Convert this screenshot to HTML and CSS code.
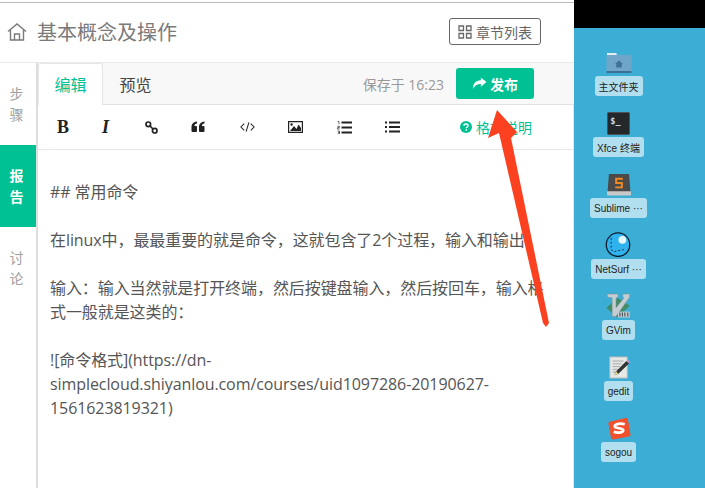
FILE: index.html
```html
<!DOCTYPE html>
<html lang="zh-CN">
<head>
    <meta charset="UTF-8">
    <meta name="viewport" content="width=device-width, initial-scale=1.0">
    <title>基本概念及操作</title>
    <link rel="stylesheet" href="styles.css">
</head>
<body>
    <main class="lab-panel">
        <header class="lab-header">
            <svg class="home-icon" viewBox="0 0 20 20" width="20" height="20">
                <path d="M1 9.500 10 2l9 7.500M3.500 8v10h13V8M7.500 18v-6h5v6" fill="none" stroke="#7a7a7a" stroke-width="1.400"/>
            </svg>
            <h1 class="lab-title">基本概念及操作</h1>
            <a class="chapter-btn" href="#">
                <svg viewBox="0 0 14 14" width="14" height="14">
                    <path d="M1 1h4.500v4.500H1zM8.500 1H13v4.500H8.500zM1 8.500h4.500V13H1zM8.500 8.500H13V13H8.500z" fill="none" stroke="#666" stroke-width="1.300"/>
                </svg>
                章节列表
            </a>
        </header>

        <div class="lab-body">
            <nav class="side-tabs">
                <a class="side-tab" href="#">步<br>骤</a>
                <a class="side-tab active" href="#">报<br>告</a>
                <a class="side-tab" href="#">讨<br>论</a>
            </nav>

            <section class="editor">
                <div class="editor-tabs">
                    <a class="editor-tab active" href="#">编辑</a>
                    <a class="editor-tab" href="#">预览</a>
                    <span class="saved-at">保存于 16:23</span>
                    <a class="publish-btn" href="#">
                        <svg viewBox="0 0 16 14" width="15" height="13">
                            <path d="M9.500 0.500 15.500 5.500 9.500 10.500V7.600C6 7.600 3 8.600 1.200 13 0.800 7.500 3.500 3.600 9.500 3.400Z" fill="#fff"/>
                        </svg>
                        发布
                    </a>
                </div>

                <div class="toolbar">
                    <span class="tool tool-b">B</span>
                    <span class="tool tool-i">I</span>
                    <span class="tool tool-link">
                        <svg viewBox="0 0 13 13" width="13" height="13">
                            <circle cx="3.300" cy="3.300" r="2.300" fill="none" stroke="#222" stroke-width="1.700"/>
                            <circle cx="9.700" cy="9.700" r="2.300" fill="none" stroke="#222" stroke-width="1.700"/>
                            <path d="M4.500 4.500 8.500 8.500" stroke="#222" stroke-width="1.700"/>
                        </svg>
                    </span>
                    <span class="tool">
                        <svg viewBox="0 0 14 12" width="14" height="12">
                            <path d="M0.500 10V6.500C0.500 3 2 1 6 0.500V2.500C4.300 2.800 3.500 3.600 3.400 5H5A1 1 0 0 1 6 6V10A1 1 0 0 1 5 11H1.500A1 1 0 0 1 .5 10ZM8 10V6.500C8 3 9.500 1 13.500 0.500V2.500C11.800 2.800 11 3.600 10.900 5H12.500A1 1 0 0 1 13.500 6V10A1 1 0 0 1 12.500 11H9A1 1 0 0 1 8 10Z" fill="#222"/>
                        </svg>
                    </span>
                    <span class="tool">
                        <svg viewBox="0 0 16 12" width="15" height="12">
                            <path d="M4.500 2.500 1 6l3.500 3.500M11.500 2.500 15 6l-3.500 3.500M9.500 1 6.500 11" fill="none" stroke="#222" stroke-width="1.100"/>
                        </svg>
                    </span>
                    <span class="tool">
                        <svg viewBox="0 0 15 12" width="15" height="12">
                            <path fill-rule="evenodd" d="M0 0h15v12H0ZM1.200 1.200v9.600h12.600V1.200Z" fill="#222"/>
                            <path d="M2 10 6 5l2.500 3L10.500 3.500 13 7v3Z" fill="#222"/>
                            <circle cx="3.600" cy="3.500" r="1.200" fill="#222"/>
                        </svg>
                    </span>
                    <span class="tool">
                        <svg viewBox="0 0 15 13" width="15" height="13">
                            <path d="M4.500 1.500H15M4.500 6.500H15M4.500 11.500H15" stroke="#222" stroke-width="1.800"/>
                            <path d="M0.800 0.500H2V3.200M0.500 5.300H2.400V6.600H0.600V8H2.600M0.500 10H2.500V12.800H0.500M1 11.400H2.500" fill="none" stroke="#222" stroke-width="0.700"/>
                        </svg>
                    </span>
                    <span class="tool">
                        <svg viewBox="0 0 15 12" width="15" height="12">
                            <path d="M4 1.500H15M4 6H15M4 10.500H15" stroke="#222" stroke-width="2"/>
                            <path d="M0 0.500H2V2.500H0ZM0 5H2V7H0ZM0 9.500H2V11.500H0Z" fill="#222"/>
                        </svg>
                    </span>
                    <a class="format-help" href="#">
                        <svg viewBox="0 0 12 12" width="12" height="12">
                            <circle cx="6" cy="6" r="6" fill="#00c194"/>
                            <path d="M4 4.700C4 3.500 5 3 6 3c1.200 0 2 .7 2 1.700C8 6 6.300 6 6.300 7.300" fill="none" stroke="#fff" stroke-width="1.400"/>
                            <rect x="5.500" y="8.200" width="1.500" height="1.400" fill="#fff"/>
                        </svg>
                        格式说明
                    </a>
                </div>

                <div class="editor-text">## 常用命令

在linux中，最最重要的就是命令，这就包含了2个过程，输入和输出

输入：输入当然就是打开终端，然后按键盘输入，然后按回车，输入格式一般就是这类的：

![命令格式](https://dn-simplecloud.shiyanlou.com/courses/uid1097286-20190627-1561623819321)</div>
            </section>
        </div>
    </main>

    <aside class="desktop">
        <div class="desktop-top"></div>
        <div class="desktop-icons">
            <div class="desk-item">
                <svg viewBox="0 0 26 22" width="26" height="22">
                    <path d="M1 3.500V1h9l1.500 2.500Z" fill="#e6edf0"/>
                    <rect x="0.500" y="3" width="25" height="18" rx="1.500" fill="#6fa5c8"/>
                    <rect x="0.500" y="19" width="25" height="2" fill="#3d6f93"/>
                    <path d="M13 8.500 9 12h1.200v3.500h5.600V12H17Z" fill="#3f7396"/>
                </svg>
                <span class="desk-label">主文件夹</span>
            </div>
            <div class="desk-item">
                <svg viewBox="0 0 24 24" width="23" height="23">
                    <rect width="23" height="23" x="0.500" y="0.500" rx="1" fill="#24282b" stroke="#4b5154"/>
                    <text class="term-prompt" x="3.500" y="12">$_</text>
                </svg>
                <span class="desk-label">Xfce 终端</span>
            </div>
            <div class="desk-item">
                <svg viewBox="0 0 26 24" width="26" height="23">
                    <path d="M2.500 1h21l1.500 19H1Z" fill="#4a4a4a"/>
                    <path d="M.500 19h25v3.500a1 1 0 0 1-1 1h-23a1 1 0 0 1-1-1Z" fill="#c9c9c9"/>
                    <path d="M17 6H10v4.500h6V15H9" fill="none" stroke="#f28a1f" stroke-width="2"/>
                </svg>
                <span class="desk-label">Sublime ···</span>
            </div>
            <div class="desk-item">
                <svg viewBox="0 0 26 26" width="26" height="26">
                    <circle cx="13" cy="13" r="12" fill="#2fb2ee" stroke="#0a1c2a" stroke-width="1.300"/>
                    <circle cx="17.500" cy="8" r="4" fill="#e6f7fe"/>
                    <path d="M6 6v12l3 2 10-2" fill="none" stroke="#123" stroke-width="0.900" stroke-dasharray="2 2"/>
                </svg>
                <span class="desk-label">NetSurf ···</span>
            </div>
            <div class="desk-item">
                <svg viewBox="0 0 26 26" width="26" height="26">
                    <path d="M13 5 1 15l11 10 13-12Z" fill="#3f8d68"/>
                    <path d="M2 1h11v3l-2 1v10l8-10-1-1V1h7v3L11 24H7V5L2 4Z" fill="#c4cdd1" stroke="#7d8a8e" stroke-width="0.500"/>
                    <path d="M13 19h12v6H13Z" fill="#c4cdd1"/>
                    <path d="M15 24v-4M17.500 24v-4M20 24v-4M23 24v-4" stroke="#3b4a50" stroke-width="1.100"/>
                </svg>
                <span class="desk-label">GVim</span>
            </div>
            <div class="desk-item">
                <svg viewBox="0 0 24 24" width="22" height="23">
                    <rect x="2" y="0.500" width="19" height="23" fill="#e6e8e6" stroke="#b4b9bb"/>
                    <path d="M5 5h12M5 8h10M5 11h8M5 14h6M5 17h5" stroke="#9da3a6"/>
                    <path d="M20 5 23 7.500 11 19 7 20.500 9 16Z" fill="#333"/>
                    <path d="M20 5 21.500 3.500 24 6 23 7.500Z" fill="#d28bbd"/>
                    <path d="M9 16 7 20.500 11 19Z" fill="#eedc8a"/>
                </svg>
                <span class="desk-label">gedit</span>
            </div>
            <div class="desk-item">
                <svg viewBox="0 0 24 24" width="24" height="23">
                    <path d="M2 5 19 1a2 2 0 0 1 2.300 1.500L24 18a2 2 0 0 1-1.500 2.300L6 23.500a2 2 0 0 1-2.300-1.500L1 7a2 2 0 0 1 1-2Z" fill="#f0502c"/>
                    <path d="M18 7.500C14 6.500 8 7 7.500 9.500 7 12.500 16.500 11 16.500 14 16.200 16.500 10 17 6.500 15.500" fill="none" stroke="#fff" stroke-width="2.800"/>
                </svg>
                <span class="desk-label">sogou</span>
            </div>
        </div>
    </aside>

    <!-- red arrow drawn over the screenshot -->
    <svg class="arrow" viewBox="0 0 705 488" width="705" height="488">
        <path d="M497 110 517 132 511 138 549 323 546 327 543 323 499 133 488 138Z" fill="#fb4120"/>
    </svg>
</body>
</html>
```

FILE: styles.css
```css
* {
    box-sizing: border-box;
}

html, body {
    height: 100%;
}

body {
    margin: 0;
    display: flex;
    overflow: hidden;
    position: relative;
    background-color: #fff;
    font-family: "Open Sans", "Noto Sans CJK SC", sans-serif;
    color: #444;
}

a {
    text-decoration: none;
    color: inherit;
}

.lab-panel {
    width: 574px;
    display: flex;
    flex-direction: column;
    border-top: 1px solid #bbb;
    margin-top: 2px;
}

.lab-header {
    height: 59px;
    display: flex;
    align-items: center;
    padding: 0 33px 2px 7px;
}

.home-icon {
    margin-right: 10px;
}

.lab-title {
    flex-grow: 1;
    margin: 0;
    font-size: 20px;
    font-weight: 400;
    color: #7a7a7a;
}

.chapter-btn {
    width: 92px;
    height: 27px;
    display: flex;
    align-items: center;
    justify-content: center;
    gap: 4px;
    border: 1px solid #666;
    border-radius: 3px;
    font-size: 14px;
    color: #666;
}

.lab-body {
    flex: 1;
    display: flex;
    border-top: 1px solid #eaeaea;
}

.side-tabs {
    width: 36px;
    flex-shrink: 0;
    display: flex;
    flex-direction: column;
}

.side-tab {
    height: 82px;
    padding-right: 3px;
    display: flex;
    align-items: center;
    justify-content: center;
    text-align: center;
    font-size: 14px;
    line-height: 21px;
    color: #a0a0a0;
}

.side-tab.active {
    background-color: #00c194;
    color: #fff;
    font-weight: 700;
}

.editor {
    flex: 1;
    min-width: 0;
    display: flex;
    flex-direction: column;
    border-left: 2px solid #dedede;
}

.editor-tabs {
    height: 42px;
    display: flex;
    align-items: center;
    background-color: #f8f8f9;
    border-bottom: 1px solid #e2e2e6;
    padding-right: 40px;
}

.editor-tab {
    width: 65px;
    height: 42px;
    display: flex;
    align-items: center;
    justify-content: center;
    font-size: 16px;
    color: #444;
}

.editor-tab.active {
    background-color: #fff;
    color: #00c194;
    border: 1px solid #e6e6ea;
    border-bottom: 0;
    border-radius: 3px 3px 0 0;
}

.saved-at {
    margin-left: auto;
    margin-right: 12px;
    font-size: 14px;
    color: #999;
}

.publish-btn {
    width: 78px;
    height: 31px;
    display: flex;
    align-items: center;
    justify-content: center;
    gap: 3px;
    background-color: #00c194;
    border-radius: 3px;
    color: #fff;
    font-size: 14px;
    font-weight: 700;
}

.toolbar {
    height: 45px;
    display: flex;
    align-items: center;
    padding-left: 19px;
    border-bottom: 1px solid #e6e6e6;
    border-right: 1px solid #e6e6e6;
}

.tool {
    width: 48.500px;
    flex-shrink: 0;
    display: flex;
    align-items: center;
    color: #222;
}

.tool-b {
    width: 45px;
    font-family: "Liberation Serif", serif;
    font-size: 18px;
    font-weight: 700;
}

.tool-i {
    width: 43px;
    font-family: "Liberation Serif", serif;
    font-size: 18px;
    font-style: italic;
    font-weight: 700;
}

.tool-link {
    width: 46px;
}

.format-help {
    margin-left: 26.500px;
    display: flex;
    align-items: center;
    gap: 4px;
    font-size: 14px;
    color: #00c194;
    white-space: nowrap;
}

.editor-text {
    flex: 1;
    padding: 30px 24px 0 12px;
    border-right: 1px solid #e6e6e6;
    font-size: 16px;
    line-height: 24px;
    letter-spacing: -0.08px;
    color: #555;
    white-space: pre-wrap;
}

.desktop {
    width: 131px;
    display: flex;
    flex-direction: column;
    background-color: #3caed6;
}

.desktop-top {
    height: 28px;
    background-color: #000;
}

.desktop-icons {
    padding: 21px 42px 0 0;
    display: flex;
    flex-direction: column;
    align-items: center;
    gap: 14px;
    font-family: "Liberation Sans", "Noto Sans CJK SC", sans-serif;
}

.desk-item {
    height: 47px;
    display: flex;
    flex-direction: column;
    align-items: center;
    justify-content: flex-end;
    gap: 2px;
}

.desk-label {
    height: 20px;
    padding: 0 4px;
    display: flex;
    align-items: center;
    border-radius: 3px;
    background-color: rgba(255, 255, 255, 0.6);
    font-size: 10px;
    color: #222;
    white-space: nowrap;
}

.term-prompt {
    font-family: "DejaVu Sans Mono", monospace;
    font-size: 9px;
    font-weight: 700;
    fill: #d8dcde;
}

.arrow {
    position: absolute;
    top: 0;
    left: 0;
    pointer-events: none;
}
```
